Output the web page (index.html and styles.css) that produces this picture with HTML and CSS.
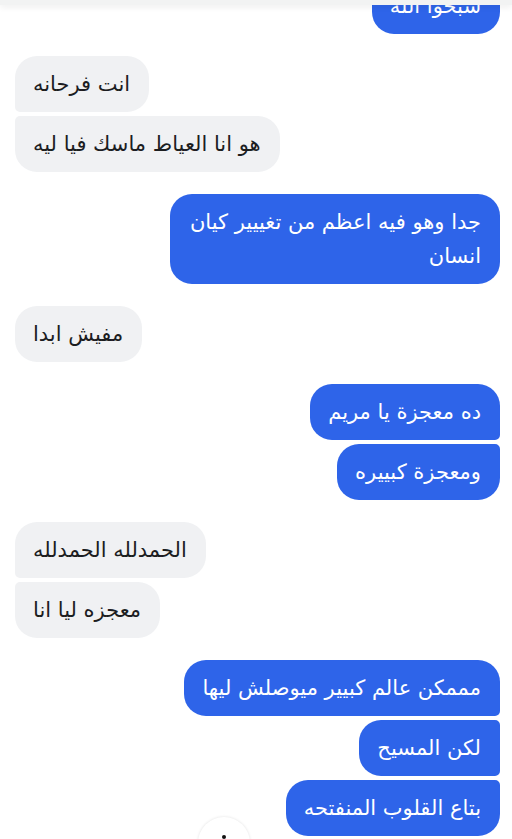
FILE: index.html
```html
<!DOCTYPE html>
<html lang="ar">
<head>
    <meta charset="UTF-8">
    <title>محادثة</title>
    <link rel="stylesheet" href="styles.css">
</head>
<body>
    <div class="top-bar"></div>

    <div class="chat">
        <div class="group sent first-cut">
            <div class="bubble">سبحوا الله</div>
        </div>

        <div class="group received">
            <div class="bubble">انت فرحانه</div>
            <div class="bubble">هو انا العياط ماسك فيا ليه</div>
        </div>

        <div class="group sent">
            <div class="bubble">جدا وهو فيه اعظم من تغييير كيان انسان</div>
        </div>

        <div class="group received">
            <div class="bubble">مفيش ابدا</div>
        </div>

        <div class="group sent">
            <div class="bubble">ده معجزة يا مريم</div>
            <div class="bubble">ومعجزة كبييره</div>
        </div>

        <div class="group received">
            <div class="bubble">الحمدلله الحمدلله</div>
            <div class="bubble">معجزه ليا انا</div>
        </div>

        <div class="group sent">
            <div class="bubble">مممكن عالم كبيير ميوصلش ليها</div>
            <div class="bubble">لكن المسيح</div>
            <div class="bubble">بتاع القلوب المنفتحه</div>
        </div>
    </div>

    <div class="scroll-button"><span class="dot"></span></div>
</body>
</html>
```

FILE: styles.css
```css
html, body {
    margin: 0;
    padding: 0;
    background-color: #fff;
    overflow: hidden;
}

body {
    font-family: "DejaVu Sans", "Noto Sans", sans-serif;
    height: 839px;
    position: relative;
}

.top-bar {
    position: absolute;
    top: 0;
    left: 0;
    right: 0;
    height: 5px;
    background-color: #f2f3f3;
    box-shadow: 0 2px 6px rgba(0, 0, 0, 0.08);
    z-index: 2;
}

.chat {
    display: flex;
    flex-direction: column;
    gap: 22px;
    padding: 0 12px 0 15px;
}

.group {
    display: flex;
    flex-direction: column;
    gap: 4px;
}

.group.first-cut {
    margin-top: -22px;
}

.bubble {
    direction: rtl;
    font-size: 21px;
    line-height: 34px;
    padding: 11px 19px 11px 18px;
    border-radius: 22px;
    max-width: 293px;
}

/* الرسائل المستلمة */
.received {
    align-items: flex-start;
}

.received .bubble {
    background-color: #f0f1f3;
    color: #1c1d1f;
}

.received .bubble:not(:last-child) {
    border-bottom-left-radius: 5px;
}

.received .bubble:not(:first-child) {
    border-top-left-radius: 5px;
}

/* الرسائل المرسلة */
.sent {
    align-items: flex-end;
}

.sent .bubble {
    background-color: #2e64e9;
    color: #fff;
}

.sent .bubble:not(:last-child) {
    border-bottom-right-radius: 5px;
}

.sent .bubble:not(:first-child) {
    border-top-right-radius: 5px;
}

.scroll-button {
    position: absolute;
    left: 198px;
    top: 817px;
    width: 52px;
    height: 52px;
    border-radius: 50%;
    background-color: #fff;
    box-shadow: 0 0 3px rgba(0, 0, 0, 0.12);
    display: flex;
    justify-content: center;
    padding-top: 18px;
    box-sizing: border-box;
}

.scroll-button .dot {
    width: 4px;
    height: 4px;
    border-radius: 50%;
    background-color: #111;
}
```
